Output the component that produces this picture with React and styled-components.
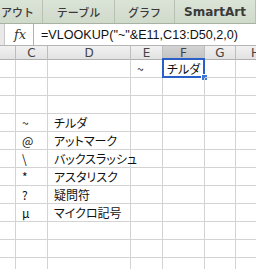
import React from "react";
import styled, { createGlobalStyle } from "styled-components";

const Global = createGlobalStyle`
  html, body { margin: 0; padding: 0; background: #fff; }
  body { width: 256px; height: 269px; overflow: hidden; }
`;

const Frame = styled.div`
  width: 256px;
  height: 269px;
  overflow: hidden;
  display: flex;
  flex-direction: column;
  font-family: "Noto Sans CJK JP", "DejaVu Sans", sans-serif;
`;

const TabBar = styled.div`
  height: 23px;
  flex: none;
  display: flex;
  background: linear-gradient(#dbe4d7, #d0dacb);
  border-bottom: 1px solid #a9b1a5;
`;

const Tab = styled.div`
  flex: none;
  width: ${(p) => p.w}px;
  display: flex;
  align-items: center;
  justify-content: ${(p) => (p.left ? "flex-end" : "center")};
  padding-right: ${(p) => (p.left ? 8 : 0)}px;
  box-sizing: border-box;
  border-right: 1px solid #b7c0b3;
  font-family: ${(p) => (p.latin ? '"DejaVu Sans", sans-serif' : '"Noto Sans CJK JP", sans-serif')};
  font-weight: ${(p) => (p.latin ? 700 : 500)};
  font-size: ${(p) => (p.latin ? 12 : 11)}px;
  color: #3a3a3a;
  white-space: nowrap;
`;

const FormulaBar = styled.div`
  height: 21px;
  flex: none;
  display: flex;
  align-items: center;
  background: #fff;
  border-bottom: 1px solid #b5b5b5;
  overflow: hidden;
`;

const NameStub = styled.div`
  flex: none;
  width: 4px;
  height: 100%;
  background: #e9e9e9;
  border-right: 1px solid #c8c8c8;
`;

const Fx = styled.div`
  flex: none;
  width: 26px;
  height: 100%;
  display: flex;
  align-items: center;
  justify-content: center;
  font-family: "DejaVu Serif", serif;
  font-style: italic;
  font-size: 13px;
  color: #333;
  border-right: 1px solid #b0b0b0;
  padding-left: 2px;
`;

const Formula = styled.div`
  flex: none;
  padding-left: 7px;
  font-family: "Liberation Sans", sans-serif;
  font-size: 12.6px;
  color: #111;
  white-space: nowrap;
`;

const Grid = styled.div`
  display: grid;
  grid-template-columns: 16px 32px 83px 32px 42px 31px 40px;
  grid-template-rows: 14px repeat(12, 18px);
`;

const Head = styled.div`
  box-sizing: border-box;
  border-right: 1px solid #bdbdbd;
  border-bottom: 1px solid #b0b0b0;
  background: ${(p) => (p.sel ? "linear-gradient(#d4d4d4, #c2c2c2)" : "linear-gradient(#f1f1f1, #e2e2e2)")};
  display: flex;
  align-items: center;
  justify-content: center;
  font-family: "DejaVu Sans", sans-serif;
  font-size: 12px;
  color: #444;
  line-height: 14px;
`;

const Cell = styled.div`
  position: relative;
  box-sizing: border-box;
  border-right: 1px solid #d3d3d3;
  border-bottom: 1px solid #d3d3d3;
  display: flex;
  align-items: center;
  padding-left: ${(p) => (p.pad ?? 6)}px;
  font-family: "Noto Sans CJK JP", sans-serif;
  font-feature-settings: "palt";
  font-size: 12px;
  color: #111;
  white-space: nowrap;
  overflow: visible;
`;

const Selected = styled.div`
  position: absolute;
  left: -1px;
  top: -2px;
  right: -1px;
  bottom: -1px;
  border: 2px solid #2a5fc8;
  pointer-events: none;
`;

const Handle = styled.div`
  position: absolute;
  right: -5px;
  bottom: -5px;
  width: 5px;
  height: 5px;
  background: #3b77d8;
  border: 1px solid #fff;
`;

const cols = ["", "C", "D", "E", "F", "G", "H"];

const data = [
  ["~", "チルダ"],
  ["@", "アットマーク"],
  ["\\", "バックスラッシュ"],
  ["*", "アスタリスク"],
  ["?", "疑問符"],
  ["μ", "マイクロ記号"],
];

export default function App() {
  const rows = [];
  for (let r = 0; r < 12; r++) {
    const d = r >= 3 && r < 9 ? data[r - 3] : null;
    rows.push(
      <React.Fragment key={r}>
        <Cell />
        <Cell pad={6}>{d ? d[0] : ""}</Cell>
        <Cell pad={6}>{d ? d[1] : ""}</Cell>
        <Cell pad={6}>{r === 0 ? "~" : ""}</Cell>
        <Cell pad={4}>
          {r === 0 ? "チルダ" : ""}
          {r === 0 && (
            <Selected>
              <Handle />
            </Selected>
          )}
        </Cell>
        <Cell />
        <Cell />
      </React.Fragment>
    );
  }
  return (
    <Frame>
      <Global />
      <TabBar>
        <Tab w={43} left>アウト</Tab>
        <Tab w={72}>テーブル</Tab>
        <Tab w={60}>グラフ</Tab>
        <Tab w={81} latin>SmartArt</Tab>
      </TabBar>
      <FormulaBar>
        <NameStub />
        <Fx>fx</Fx>
        <Formula>=VLOOKUP("~"&amp;E11,C13:D50,2,0)</Formula>
      </FormulaBar>
      <Grid>
        {cols.map((c, i) => (
          <Head key={i} sel={c === "F"}>{c}</Head>
        ))}
        {rows}
      </Grid>
    </Frame>
  );
}
